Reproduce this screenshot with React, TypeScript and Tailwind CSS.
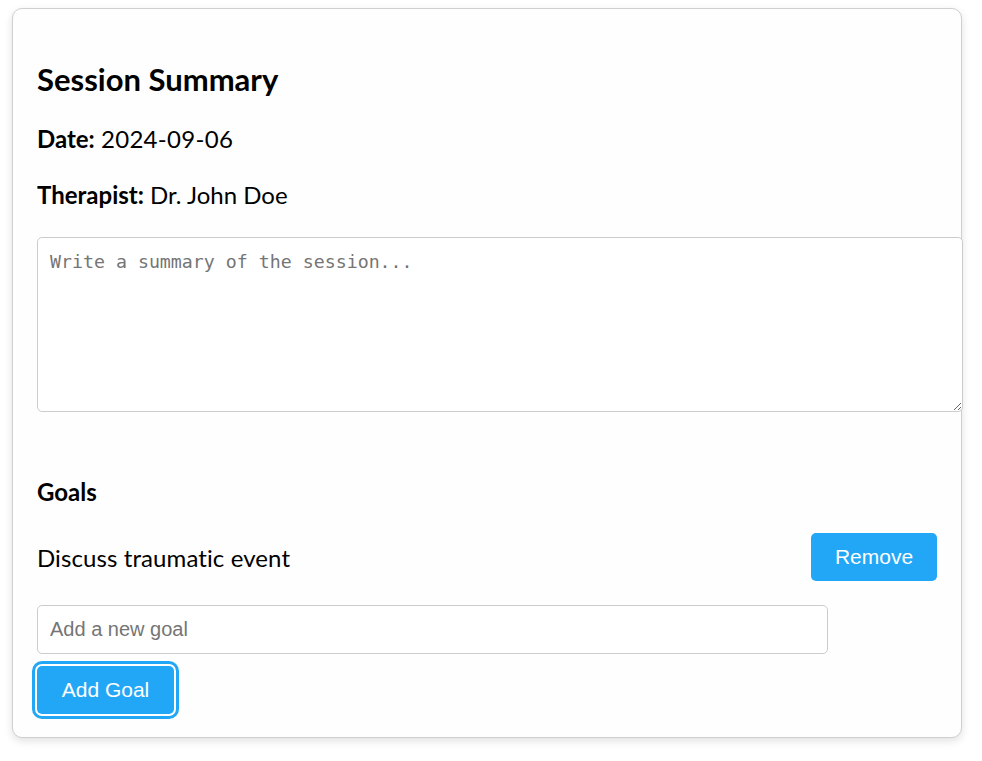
import React, { useState } from 'react'

export default function App() {
  const [goals, setGoals] = useState<string[]>(['Discuss traumatic event'])
  const [newGoal, setNewGoal] = useState('')
  const [summary, setSummary] = useState('')

  return (
    <div className="min-h-screen bg-white pt-[8px] pl-[12px] font-['Lato','Noto_Sans',sans-serif] text-black">
      <div className="w-[950px] rounded-[10px] border border-[#cfcfcf] bg-[#fefefe] px-[24px] pt-[24px] pb-[23px] shadow-[0_3px_8px_rgba(0,0,0,0.12)]">
        <h2 className="mt-[28px] text-[31px] font-bold leading-[36px]">Session Summary</h2>

        <p className="mt-[27px] text-[24px] leading-[29px]">
          <span className="font-bold">Date:</span> <span className="tracking-[0.3px]">2024-09-06</span>
        </p>
        <p className="mt-[27px] text-[24px] leading-[29px]">
          <span className="font-bold">Therapist:</span> Dr. John Doe
        </p>

        <textarea
          value={summary}
          onChange={(e) => setSummary(e.target.value)}
          placeholder="Write a summary of the session..."
          className="mt-[28px] box-content block h-[149px] w-full rounded-[5px] border border-[#cccccc] bg-white px-[12px] pt-[13px] pb-[11px] font-['DejaVu_Sans_Mono',monospace] text-[18.25px] leading-[1.2] placeholder:text-[#757575] focus:outline-none"
        />

        {/* Goals */}
        <h3 className="mt-[65px] text-[24px] font-bold leading-[29px]">Goals</h3>
        <div className="mt-[27px] flex flex-col">
          {goals.map((g, i) => (
            <div key={i} className="flex items-center justify-between">
              <span className="text-[24px] leading-[29px] tracking-[0.1px]">{g}</span>
              <button
                onClick={() => setGoals(goals.filter((_, j) => j !== i))}
                className="h-[48px] w-[126px] rounded-[5px] bg-[#22a7f7] font-['Liberation_Sans',Arial,sans-serif] text-[21px] text-white"
              >
                Remove
              </button>
            </div>
          ))}
        </div>

        <input
          value={newGoal}
          onChange={(e) => setNewGoal(e.target.value)}
          placeholder="Add a new goal"
          className="mt-[24px] block h-[49px] w-[791px] rounded-[5px] border border-[#cccccc] bg-white px-[12px] font-['Liberation_Sans',Arial,sans-serif] text-[20px] placeholder:text-[#757575] focus:outline-none"
        />
        <button
          onClick={() => {
            if (newGoal.trim()) {
              setGoals([...goals, newGoal.trim()])
              setNewGoal('')
            }
          }}
          className="mt-[12px] block h-[48px] w-[137px] rounded-[5px] bg-[#22a7f7] font-['Liberation_Sans',Arial,sans-serif] text-[21px] text-white ring-[3px] ring-[#22a7f7] ring-offset-2"
        >
          Add Goal
        </button>
      </div>
    </div>
  )
}
